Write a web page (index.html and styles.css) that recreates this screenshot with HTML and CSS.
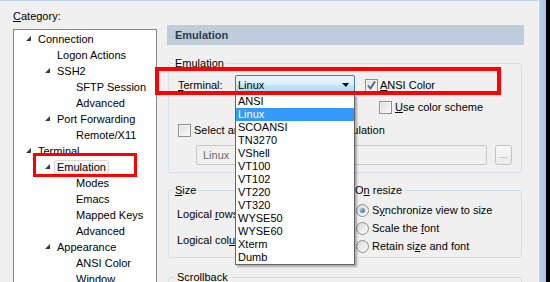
FILE: index.html
```html
<!DOCTYPE html>
<html lang="en">

<head>
    <meta charset="UTF-8">
    <title>Session Options - Emulation</title>
    <link rel="stylesheet" href="styles.css">
</head>

<body>
    <div class="screen">
        <div class="dialog">
            <div class="category">
                <div class="cat-label"><u>C</u>ategory:</div>
                <ul class="tree">
                    <li class="l0"><span class="twisty open"></span>Connection</li>
                    <li class="l1"><span class="twisty"></span>Logon Actions</li>
                    <li class="l1"><span class="twisty open"></span>SSH2</li>
                    <li class="l2"><span class="twisty"></span>SFTP Session</li>
                    <li class="l2"><span class="twisty"></span>Advanced</li>
                    <li class="l1"><span class="twisty open"></span>Port Forwarding</li>
                    <li class="l2"><span class="twisty"></span>Remote/X11</li>
                    <li class="l0"><span class="twisty open"></span>Terminal</li>
                    <li class="l1"><span class="twisty open"></span><span class="selected">Emulation</span></li>
                    <li class="l2"><span class="twisty"></span>Modes</li>
                    <li class="l2"><span class="twisty"></span>Emacs</li>
                    <li class="l2"><span class="twisty"></span>Mapped Keys</li>
                    <li class="l2"><span class="twisty"></span>Advanced</li>
                    <li class="l1"><span class="twisty open"></span>Appearance</li>
                    <li class="l2"><span class="twisty"></span>ANSI Color</li>
                    <li class="l2"><span class="twisty"></span>Window</li>
                </ul>
            </div>

            <div class="panel">
                <div class="panel-head">Emulation</div>

                <fieldset class="group emu">
                    <legend>Emulation</legend>
                    <div class="row term-row">
                        <span class="term-label"><u>T</u>erminal:</span>
                        <div class="combo">
                            <span class="combo-text">Linux</span>
                            <span class="arrow"></span>
                            <ul class="droplist">
                                <li>ANSI</li>
                                <li class="hl">Linux</li>
                                <li>SCOANSI</li>
                                <li>TN3270</li>
                                <li>VShell</li>
                                <li>VT100</li>
                                <li>VT102</li>
                                <li>VT220</li>
                                <li>VT320</li>
                                <li>WYSE50</li>
                                <li>WYSE60</li>
                                <li>Xterm</li>
                                <li>Dumb</li>
                            </ul>
                        </div>
                        <span class="check ansi-check">
                            <svg width="11" height="11" viewBox="0 0 11 11"><path d="M2 5.5 L4.5 8.5 L9 1.5" fill="none" stroke="#4b5f85" stroke-width="1.8"/></svg>
                        </span>
                        <span class="check-text"><u>A</u>NSI Color</span>
                    </div>
                    <div class="row scheme-row">
                        <span class="check"></span>
                        <span class="check-text"><u>U</u>se color scheme</span>
                    </div>
                    <div class="row alt-row">
                        <span class="check"></span>
                        <span class="check-text">Select an alternate keyboard emulation</span>
                    </div>
                    <div class="row input-row">
                        <div class="textbox">Linux</div>
                        <div class="dots">...</div>
                    </div>
                </fieldset>

                <div class="pair">
                    <fieldset class="group size">
                        <legend><u>S</u>ize</legend>
                        <div class="size-row">
                            <span class="size-label">Logical <u>r</u>ows:</span>
                            <div class="spin">24</div>
                        </div>
                        <div class="size-row">
                            <span class="size-label">Logical col<u>u</u>mns:</span>
                            <div class="spin">80</div>
                        </div>
                    </fieldset>
                    <fieldset class="group resize">
                        <legend>O<u>n</u> resize</legend>
                        <div class="radio-row"><span class="radio on"></span><span>S<u>y</u>nchronize view to size</span></div>
                        <div class="radio-row"><span class="radio"></span><span>Scale the <u>f</u>ont</span></div>
                        <div class="radio-row"><span class="radio"></span><span>Retain si<u>z</u>e and font</span></div>
                    </fieldset>
                </div>

                <fieldset class="group scroll">
                    <legend>Scrollback</legend>
                </fieldset>
            </div>
        </div>
        <div class="frame"></div>
        <div class="void"></div>
    </div>

    <div class="mark mark-term"></div>
    <div class="mark mark-emu"></div>
</body>

</html>
```

FILE: styles.css
```css
* {
    margin: 0;
    padding: 0;
    box-sizing: border-box;
}

body {
    width: 550px;
    height: 282px;
    overflow: hidden;
    font-family: "Liberation Sans", Arial, sans-serif;
    font-size: 11px;
    color: #000;
    background-color: #000;
}

ul {
    list-style: none;
}

.screen {
    display: flex;
    height: 282px;
}

.dialog {
    width: 538px;
    display: flex;
    padding-left: 13px;
    background-color: #f0f0f0;
    border-top: 1px solid #b9d1ea;
}

.frame {
    width: 8px;
    border-left: 1px solid #fdfdfd;
    background: linear-gradient(to right, #bcd2ea, #a9c5e5);
}

.void {
    flex: 1;
    background-color: #000;
}

/* category tree */

.category {
    width: 144px;
    padding-top: 9px;
}

.cat-label {
    height: 13px;
    line-height: 13px;
}

.tree {
    margin-top: 6px;
    height: 320px;
    padding-top: 1px;
    background-color: #fff;
    border: 1px solid #828790;
}

.tree li {
    height: 16px;
    line-height: 16px;
    display: flex;
    align-items: center;
    white-space: nowrap;
}

.tree .l0 {
    padding-left: 12px;
}

.tree .l1 {
    padding-left: 31px;
}

.tree .l2 {
    padding-left: 50px;
}

.twisty {
    width: 12px;
    height: 16px;
    flex-shrink: 0;
    position: relative;
}

.twisty.open::before {
    content: "";
    position: absolute;
    left: 0;
    top: 5px;
    border-left: 5px solid transparent;
    border-bottom: 5px solid #3a3a3a;
}

.selected {
    margin-left: -3px;
    padding: 0 2px;
    height: 15px;
    line-height: 13px;
    border: 1px solid #d9d9d9;
    border-radius: 2px;
    background: linear-gradient(#fafafa, #ececec);
}

/* right panel */

.panel {
    width: 357px;
    margin-left: 10px;
    padding-top: 24px;
}

.panel-head {
    height: 20px;
    line-height: 20px;
    padding-left: 8px;
    font-weight: bold;
    color: #2b3b4e;
    background-color: #bfcddb;
}

.group {
    border: 1px solid #d5dfe5;
    border-radius: 3px;
    min-width: 0;
}

.group legend {
    height: 13px;
    line-height: 13px;
    padding: 0 2px;
}

.emu {
    margin: 12px 2px 0 1px;
    padding: 5px 9px 7px 9px;
}

.emu legend {
    margin-left: -5px;
}

.row {
    display: flex;
    align-items: center;
}

.term-row {
    height: 20px;
}

.term-label {
    width: 57px;
}

.combo {
    position: relative;
    width: 120px;
    height: 20px;
    display: flex;
    align-items: center;
    padding-left: 2px;
    border: 1px solid #3c7fb1;
    border-radius: 2px;
    background: linear-gradient(#eaf6fd 0%, #d9f0fc 50%, #bee6fd 50%, #a7d9f5 100%);
}

.arrow {
    margin-left: auto;
    margin-right: 5px;
    border-left: 4px solid transparent;
    border-right: 3px solid transparent;
    border-top: 4px solid #000;
}

.droplist {
    position: absolute;
    left: -1px;
    top: 18px;
    width: 120px;
    z-index: 5;
    background-color: #fff;
    border: 1px solid #646464;
    box-shadow: 2px 2px 2px rgba(0, 0, 0, 0.3);
}

.droplist li {
    height: 13px;
    line-height: 13px;
    padding-left: 2px;
}

.droplist .hl {
    color: #fff;
    background-color: #3399ff;
}

.check {
    width: 13px;
    height: 13px;
    flex-shrink: 0;
    border: 1px solid #8e8f8f;
    background: linear-gradient(135deg, #dcdcdc, #fbfbfb);
    box-shadow: inset 0 0 0 1px #f4f4f4;
    display: flex;
    align-items: center;
    justify-content: center;
}

.check-text {
    margin-left: 3px;
    white-space: nowrap;
}

.ansi-check {
    margin-left: 10px;
}

.ansi-check + .check-text {
    margin-left: 2px;
}

.scheme-row {
    height: 14px;
    margin-top: 5px;
    padding-left: 201px;
}

.alt-row {
    height: 14px;
    margin-top: 9px;
}

.input-row {
    height: 20px;
    margin-top: 8px;
    padding-left: 18px;
}

.textbox {
    width: 291px;
    height: 20px;
    line-height: 18px;
    padding-left: 6px;
    color: #6d6d6d;
    border: 1px solid #c8c8c8;
    border-radius: 2px;
}

.dots {
    width: 17px;
    height: 20px;
    margin-left: 8px;
    line-height: 18px;
    text-align: center;
    font-size: 9px;
    color: #8a8a8a;
    border: 1px solid #c3c3c3;
    border-radius: 3px;
    background: linear-gradient(#f8f8f8, #ebebeb);
}

.pair {
    display: flex;
    gap: 8px;
    margin: 11px 2px 0 1px;
}

.size {
    width: 172px;
    padding: 7px 8px 7px 8px;
}

.size legend {
    margin-left: -4px;
}

.size-row {
    height: 20px;
    display: flex;
    align-items: center;
}

.size-row + .size-row {
    margin-top: 6px;
}

.size-label {
    width: 90px;
    white-space: nowrap;
}

.spin {
    width: 60px;
    height: 20px;
    line-height: 18px;
    padding-left: 4px;
    border: 1px solid #abadb3;
    background-color: #fff;
}

.resize {
    flex: 1;
    padding: 4px 7px 2px 7px;
}

.resize legend {
    margin-left: -3px;
}

.radio-row {
    height: 18px;
    display: flex;
    align-items: center;
    white-space: nowrap;
}

.radio {
    width: 13px;
    height: 13px;
    margin-right: 3px;
    flex-shrink: 0;
    border: 1px solid #8e8f8f;
    border-radius: 50%;
    background: linear-gradient(135deg, #d8d8d8, #fbfbfb);
    display: flex;
    align-items: center;
    justify-content: center;
}

.radio.on::after {
    content: "";
    width: 5px;
    height: 5px;
    border-radius: 50%;
    background: radial-gradient(circle at 35% 35%, #8cc7f0, #1d5f9e);
}

.scroll {
    margin: 13px 2px 0 1px;
    height: 40px;
    padding: 0 9px;
}

.scroll legend {
    margin-left: -3px;
}

/* red callouts */

.mark {
    position: absolute;
    border: 3px solid #ff0000;
    z-index: 10;
}

.mark-term {
    left: 155px;
    top: 67px;
    width: 346px;
    height: 28px;
    border-width: 4px;
}

.mark-emu {
    left: 33px;
    top: 153px;
    width: 104px;
    height: 24px;
}
```
